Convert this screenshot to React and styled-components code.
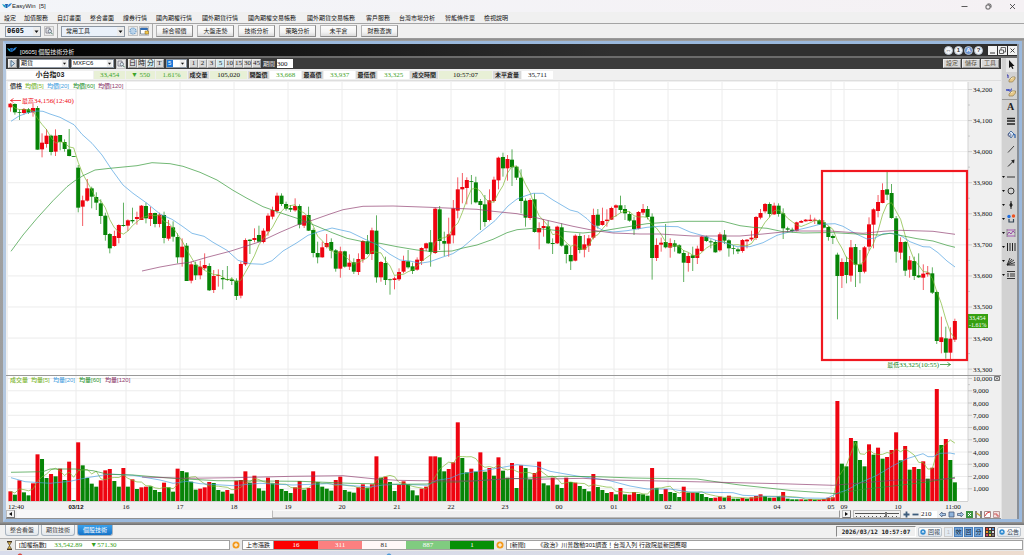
import styled, { createGlobalStyle, css } from "styled-components";

const SANS = `"Liberation Sans", "Noto Sans CJK TC", sans-serif`;
const SERIF = `"Liberation Serif", "Noto Sans CJK TC", serif`;
const MONO = `"DejaVu Sans Mono", "Noto Sans CJK TC", monospace`;

const UP = "#ee0410";
const DOWN = "#078407";
const MA5 = "#7ab52c";
const MA20 = "#4a9fe0";
const MA60 = "#2e9632";
const MA120 = "#8f3c6e";

const GlobalStyle = createGlobalStyle`
	* { box-sizing: border-box; }
	body {
		margin: 0;
		background: #f0f0f0;
		font-family: ${SANS};
		font-size: 6px;
		line-height: 8px;
		color: #222;
	}
	button, input, select {
		margin: 0;
		padding: 0;
		border: 0;
		border-radius: 0;
		font: inherit;
		color: inherit;
	}
	svg { display: block; flex: none; }
`;

const Page = styled.div`
	display: flex;
	flex-direction: column;
	min-height: 100vh;
	white-space: nowrap;
`;

const TitleBar = styled.header`
	display: flex;
	align-items: center;
	height: 12px;
	padding: 0 0 0 2px;
	background: linear-gradient(90deg, #f3f5f9, #f5f1f4);
`;

const Spacer = styled.div`
	flex: 1;
`;

const CaptionButton = styled.button`
	display: flex;
	align-items: center;
	justify-content: center;
	width: 24px;
	height: 11px;
	background: none;
`;

const MenuBar = styled.nav`
	display: flex;
	height: 11px;
	padding: 0 4px;
`;

const menuWidths = { 2: 20, 4: 33, 5: 39, 6: 46, 8: 59 };
const MenuItem = styled.button`
	width: ${(props) => menuWidths[props.$chars]}px;
	background: none;
	text-align: left;
	color: #111;
`;

const Toolbar = styled.div`
	display: flex;
	align-items: center;
	height: 16px;
	padding: 0 5px;
	gap: 3px;
	border-top: 1px solid #a4a4a4;
	border-bottom: 1px solid #9a9a9a;
`;

const Divider = styled.span`
	width: 1px;
	height: 14px;
	background: #aaa;
`;

const Combo = styled.div`
	position: relative;
	width: ${(props) => props.$width}px;
	height: ${(props) => (props.$small ? 9 : 11)}px;
	border: 1px solid #8d97a3;
	background: ${(props) => (props.$small ? "#fff" : "#eaf1fa")};
	svg {
		position: absolute;
		right: 0;
		top: 0;
		height: 100%;
		pointer-events: none;
	}
`;

const Select = styled.select`
	display: block;
	appearance: none;
	width: 100%;
	height: 100%;
	padding-left: ${(props) => (props.$indent ? 4 : 1)}px;
	background: none;
	font-family: ${(props) => (props.$mono ? MONO : SANS)};
	font-weight: ${(props) => (props.$mono ? "bold" : "normal")};
	font-size: ${(props) => (props.$mono ? 7 : 6)}px;
	line-height: 7px;
	color: #111;
`;

const IconButton = styled.button`
	display: flex;
	align-items: center;
	justify-content: center;
	width: 10px;
	height: 10px;
	border: 1px solid #c4c4c4;
	background: #e9e9e9;
`;

const Shortcuts = styled.div`
	display: flex;
	gap: 4px;
`;

const ShortcutButton = styled.button`
	width: 37px;
	height: 12px;
	border: 1px solid #b5b5b5;
	border-right-color: #8c8c8c;
	border-bottom-color: #8c8c8c;
	background: linear-gradient(#fdfdfd, #f3f3f3 60%, #dcdcdc);
	color: #222;
`;

const Workspace = styled.main`
	padding: 2px 2px 3px 3px;
	background: linear-gradient(#8a8a8a, #a4a4a4 2px, #9a9a9a calc(100% - 3px), #6e6e6e);
`;

const Frame = styled.section`
	border: 3px solid #9bb9dd;
	border-left-color: #b4c8e0;
	padding-right: 2px;
	background: #8a9098;
`;

const FrameTitle = styled.div`
	display: flex;
	align-items: center;
	gap: 1px;
	height: 14px;
	padding: 0 0 0 1px;
	border-bottom: 2px solid #6c6c6c;
	background: linear-gradient(90deg, #000, #303030 60%);
	color: #eee;
	font-size: 6px;
`;

const FrameName = styled.span`
	padding: 4px 0 0 2px;
	line-height: 8px;
`;

const RoundButton = styled.button`
	display: flex;
	align-items: center;
	justify-content: center;
	width: 9px;
	height: 9px;
	border-radius: 50%;
	border: 1px solid #b9c3cf;
	background: ${(props) => (props.$blue ? "#6f95d0" : "#f1f4f8")};
	color: ${(props) => (props.$blue ? "#fff" : "#333")};
	font-weight: bold;
	font-size: 6px;
	line-height: 7px;
`;

const WindowButtons = styled.div`
	display: flex;
	gap: 1px;
	padding-left: 4px;
`;

const WindowButton = styled.button`
	width: 9px;
	height: 9px;
	background: #f3f3f3;
`;

const FrameBody = styled.div`
	display: flex;
`;

const Content = styled.div`
	flex: 1;
	min-width: 0;
	background: #f0f0f0;
`;

const ChartBar = styled.div`
	display: flex;
	align-items: center;
	height: 11px;
	padding: 0 2px;
	gap: 2px;
	background: #3b3b3b;
`;

const Group = styled.div`
	display: flex;
	gap: ${(props) => props.$gap || 0}px;
`;

const BarButton = styled.button`
	width: ${(props) => (props.$wide ? 18 : 9)}px;
	height: 9px;
	border: 1px solid #999;
	border-top-color: #eee;
	border-left-color: #eee;
	background: ${(props) => (props.$on ? "#cfeaf0" : "#d8d8d8")};
	font-family: ${SERIF};
	font-size: ${(props) => (props.$wide ? 6 : 7)}px;
	line-height: 7px;
	color: ${(props) => (props.$wide ? "#5c5444" : "#222")};
`;

const FieldLabel = styled.label`
	display: flex;
	align-items: center;
	gap: 2px;
	color: #eee;
`;

const TextInput = styled.input`
	width: 16px;
	height: ${(props) => (props.$low ? 7 : 9)}px;
	background: #fff;
	color: #111;
	font-family: ${SERIF};
	font-size: 7px;
	line-height: 7px;
`;

const QuoteBar = styled.dl`
	display: flex;
	align-items: center;
	height: 12px;
	margin: 0;
	padding: 0 1px;
	border-bottom: 1px solid #dedede;
	gap: 1px;
`;

const QuoteName = styled.dt`
	width: 86px;
	background: #fff;
	text-align: center;
	font-weight: bold;
	font-size: 7px;
`;

const QuoteLabel = styled.dt`
	width: ${(props) => (props.$long ? 28 : 21)}px;
	background: #d9d9d9;
	text-align: center;
	font-size: 6px;
	font-weight: 500;
	color: #000;
`;

const QuoteValue = styled.dd`
	margin: 0;
	width: ${(props) => props.$width || 31}px;
	background: ${(props) => (props.$tint ? "#e8f0d6" : "#fff")};
	color: ${(props) => (props.$down ? "#3fa32a" : "#111")};
	font-family: ${SERIF};
	font-size: 7px;
	text-align: center;
`;

const Chart = styled.svg`
	width: 100%;
	height: auto;
	font-family: ${SERIF};
	font-size: 7px;
`;

const ScrollRow = styled.div`
	display: flex;
	align-items: center;
	height: 9px;
	gap: 2px;
	padding-right: 1px;
	border-bottom: 1px solid #8f8f8f;
`;

const ArrowButton = styled.button`
	display: flex;
	align-items: center;
	justify-content: center;
	width: 9px;
	height: 8px;
	border: 1px solid #bbb;
	border-right-color: #777;
	border-bottom-color: #777;
	background: #f4f4f4;
`;

const ScrollTrack = styled.div`
	display: flex;
	justify-content: flex-end;
	flex: 1;
	height: 8px;
	background: #f8f8f8;
`;

const ScrollThumb = styled.div`
	width: 69%;
	border: 1px solid #fafafa;
	border-left-color: #bbb;
	border-right-color: #999;
	border-bottom-color: #bbb;
	background: #efefef;
`;

const Zoom = styled.input`
	appearance: none;
	width: 48px;
	height: 8px;
	border: 1px solid #bbb;
	background: repeating-linear-gradient(90deg, #555 0 1px, transparent 1px 4px) 2px 5px / 42px 1px no-repeat,
		linear-gradient(#555, #555) 1px 2px / 44px 1px no-repeat, #f3f3f3;
	&::-webkit-slider-thumb {
		appearance: none;
		width: 2px;
		height: 5px;
		background: #777;
	}
`;

const MiniButton = styled.button`
	display: flex;
	align-items: center;
	justify-content: center;
	width: 7px;
	height: 7px;
	background: none;
`;

const ToolColumn = styled.aside`
	display: flex;
	flex-direction: column;
	width: 16px;
	background: #d2d2d2;
	border-left: 1px solid #e4e4e4;
`;

const Tool = styled.button`
	display: flex;
	align-items: center;
	justify-content: flex-end;
	height: 14px;
	padding-right: 1px;
	background: none;
	${(props) => props.$on && css`
		background: linear-gradient(90deg, transparent 4px, #e6e6e6 4px);
	`}
	${(props) => props.$rule && css`
		border-bottom: 1px solid #999;
	`}
`;

const TabBar = styled.div`
	display: flex;
	align-items: center;
	height: 14px;
	padding: 0 3px 0 5px;
	gap: 2px;
	border-bottom: 1px solid #b4b4b4;
`;

const Tab = styled.button`
	width: ${(props) => (props.$on ? 36 : 34)}px;
	height: 11px;
	margin-bottom: 2px;
	border: 1px solid #a9b4c0;
	border-top: 0;
	border-radius: 0 0 3px 3px;
	background: ${(props) => (props.$on ? "linear-gradient(#3aa0ec, #1673c8)" : "linear-gradient(#fafafa, #e4e8ec)")};
	color: ${(props) => (props.$on ? "#fff" : "#444")};
`;

const Clock = styled.time`
	width: 80px;
	height: 11px;
	border: 1px solid #888;
	border-right-color: #fff;
	border-bottom-color: #fff;
	background: #f0f0f0;
	font-family: ${MONO};
	font-weight: bold;
	font-size: 6px;
	line-height: 9px;
	text-align: center;
`;

const SmallButton = styled.button`
	display: flex;
	align-items: center;
	justify-content: center;
	gap: 2px;
	width: 24px;
	height: 10px;
	border: 1px solid #bcc4cd;
	border-radius: 2px;
	background: linear-gradient(#fff, #dde3ea);
	color: #345;
`;

const Indicator = styled.button`
	width: 9px;
	height: 10px;
	border: 1px solid ${(props) => (props.$on ? "#4a7fba" : "#ccc")};
	background: ${(props) => (props.$on ? "#76a8dc" : "#e2eaf2")};
	color: ${(props) => (props.$on ? "#123" : "#bbb")};
	line-height: 8px;
`;

const StatusBar = styled.footer`
	display: flex;
	align-items: center;
	height: 12px;
	padding: 0 1px 0 6px;
	gap: 2px;
	background: #e8e8e8;
`;

const StatusBox = styled.div`
	flex: ${(props) => props.$flex || "none"};
	display: flex;
	gap: ${(props) => (props.$news ? 12 : 8)}px;
	height: 10px;
	padding: 0 3px;
	border: 1px solid #a0a0a0;
	background: #fff;
	color: #111;
`;

const Index = styled.span`
	font-family: ${SERIF};
	font-size: 7px;
	color: #35a020;
`;

const Breadth = styled.span`
	width: 44px;
	height: 10px;
	border: 1px solid #a0a0a0;
	border-width: 1px 0;
	background: ${(props) => props.$bg};
	color: ${(props) => props.$fg || "#fff"};
	font-family: ${SERIF};
	font-size: 7px;
	line-height: 8px;
	text-align: center;
`;

const TaskStrip = styled.div`
	flex: 1;
	min-height: 4px;
	background: radial-gradient(circle at 20px 5px, #d8483e 2px, transparent 3px),
		radial-gradient(circle at 389px 5px, #4e9ad8 2px, transparent 3px),
		linear-gradient(90deg, #d8dceb, #d9dbe6 75%, #f0dccb 92%, #ecdcd0);
`;

const menus = ["設定", "加值服務", "自訂畫面", "整合畫面", "證券行情", "國內期權行情", "國外期貨行情", "國內期權交易帳務", "國外期貨交易帳務", "客戶服務", "台灣市場分析", "智能條件單", "檢視說明"];
const shortcuts = ["綜合報價", "大盤走勢", "技術分析", "策略分析", "未平倉", "財務查詢"];

// side, high, top, bottom, low: thirds of a pixel below each block's base
const candleBlocks = [
	[0, `r69,71,82,95 g70,72,97,104 g88,96,98,120 r84,87,99,104 g84,88,98,102 r72,84,97,110 g78,84,209,209 r160,188,208,232 r147,167,192,203 g164,167,216,226
	r148,167,215,228 g165,165,186,211 g178,186,207,215 g147,208,228,229 g228,228,230,230 g255,263,383,397 r347,361,380,438 r297,325,362,365 g320,325,350,385 g337,351,368,390
	g358,370,408,432 g398,407,465,482 g459,462,505,520 r452,468,498,500 r433,435,474,490 g368,435,438,440 r418,421,437,453 g383,420,424,430 r395,411,417,434 r375,377,420,420
	g368,378,415,430 r380,399,417,438 g398,399,432,442 r398,404,432,442 g395,405,474,490 r420,438,476,482 g424,442,470,485 g460,471,532,550 r475,500,532,560 g489,497,603,603
	r545,553,602,610 g545,554,586,600 r542,560,586,598 r520,555,565,570 g550,558,631,633 r570,588,630,639 r568,585,587,620 g570,594,598,628 g558,597,600,602 g592,598,603,615`],
	[270, `g325,332,378,390 r275,282,377,385 r205,210,283,288 g208,209,213,252 r175,204,210,217 g167,195,215,217 r175,182,216,220 r130,137,184,197 r110,120,140,148 r68,77,123,130
	g70,77,102,108 g95,102,116,122 g105,114,119,126 r85,108,121,125 g103,108,164,175 r135,136,167,174 g110,135,182,183 g175,180,249,262 g215,249,262,280 r215,232,262,263
	r192,219,231,235 g205,216,242,265 g237,241,296,305 r230,244,296,323 g242,244,290,293 r253,278,290,300 g265,277,305,312 r250,267,306,315 r210,213,268,278 g195,214,252,254
	r173,181,252,270 g136,182,322,338 r273,276,322,335 g260,279,330,345 g326,328,330,374 r320,325,330,358 r295,306,328,333 r257,273,305,310 g240,274,292,296 g278,289,303,312
	r262,269,299,302 r232,234,273,285 r218,220,235,243 g180,217,246,290 r113,116,249,252 g108,118,213,240 g185,213,221,258 r143,193,221,260 r90,115,196,220 r22,58,122,145
	r9,51,58,100 r22,30,54,103 g15,33,35,103`],
	[150, `g140,157,217,220 g207,213,225,300 g195,223,276,290 r178,211,270,274 r140,149,213,218 r80,83,151,178 g68,81,115,140 r75,87,115,152 g58,89,112,168 g107,110,143,150
	g118,143,213,250 g205,212,263,290 r205,210,264,270 g190,208,306,308 r277,294,307,358 r268,288,294,320 g272,289,340,342 g325,339,342,372 r287,290,340,342 g280,292,347,350
	g342,346,372,400 g350,375,394,420 r313,317,392,394 g310,318,360,370 r315,343,359,382 r315,325,347,366 r236,255,323,328 g237,254,287,296 r233,273,285,287 r238,269,273,290
	r230,234,269,270 r223,226,233,260 g197,226,240,248 g225,237,250,270 g245,252,272,275`],
	[300, `g110,121,147,165 r93,96,146,148 r72,87,98,105 g78,87,111,118 g100,110,234,299 r175,195,234,243 r173,188,194,215 g132,186,202,205 r175,189,203,233 g180,190,200,215
	g193,196,220,222 g210,219,248,306 r218,228,249,275 g200,226,234,273 r197,206,234,252 r168,170,213,216 g167,170,183,186 g178,184,187,205 g180,186,217,218 r157,163,211,215
	g150,164,182,192 g178,181,205,230 g195,204,206,223 g203,208,214,222 r177,180,213,218 r177,179,184,205 r152,173,178,183 r108,111,174,180 r87,99,113,118 r69,72,94,100
	g67,72,102,112 r68,77,103,105 g70,77,102,110 g85,100,145,177 g140,145,149,157 g143,149,153,157 r125,127,152,154 r120,123,128,129 r117,119,124,125 r104,119,123,124
	r113,119,122,132 g118,121,133,135 g120,127,143,145`],
	[150, `g288,291,321,332 g313,318,324,342 g368,374,438,568 r385,396,438,474 g380,396,435,460 r330,352,437,455 g342,351,404,471 g360,403,426,460 r348,352,425,430 r262,283,350,362
	r235,238,284,355 r195,216,243,262 r160,180,219,220 g126,178,194,210 g162,189,264,266 g258,265,365,398 r322,336,368,388 g333,336,422,438 r378,391,419,443 g380,393,438,450
	g370,436,442,444 r403,431,443,480 r408,428,433,440 g412,430,488,492 g482,486,633,642 r560,622,636,670 g590,625,668,686 r592,626,668,690 r566,573,629,636`],
];

const candles = candleBlocks.flatMap(([base, rows]) =>
	rows.split(/\s+/).map((row) => {
		const [high, top, bottom, low] = row.slice(1).split(",").map((v) => 80 + (base + Number(v)) / 3);
		return { up: row[0] === "r", high, top, bottom, low };
	})
);

const volumes = `r364 g374 r331 g367 g376 r340 r253 g267 g324 r312 g319 r296 g330 r275 g390 r217 g286 g324 g341 g350 r331 r301 r297 g333 g350 r294 g350 r328 g357 r352
r350 g349 g360 g366 r338 g352 g365 r296 g303 g307 g335 g359 r356 r352 r336 g339 g360 g365 r360 g371 r332 r330 r304 g338 r317 g355 g362 r323 g340 r330
g357 g363 g369 r352 r333 g359 r354 r304 g336 g350 g356 g362 r330 r320 g360 g365 g368 r352 r343 g353 r343 r259 g323 r320 g336 g363 r345 r334 g343 g361
g376 r356 r350 r259 r259 g262 g304 r297 r277 r157 g264 g307 r296 g305 r247 g305 r294 g317 r262 g302 g323 r279 g354 r286 g294 g328 r309 r275 g340 g346
r323 g344 g354 r323 g336 r338 g348 g357 g364 r312 g351 g360 g369 r366 g373 r354 g373 r374 r366 g372 g373 g377 r294 g354 g372 r357 g366 g369 g381 r350
g368 r368 g368 g372 g381 g384 r383 r380 g383 r377 g386 g386 r384 g386 r382 r378 r373 g378 g383 r383 g379 r366 g386 g388 g388 r388 g389 r387 g389 r389
r387 r383 r382 r93 g281 g289 r204 g213 g270 g289 r223 g254 r233 g266 r261 r240 r187 g271 r228 g299 r291 g297 r274 g326 r293 r57 g225 r207 g270 g337`
	.split(/\s+/)
	.map((v) => ({ up: v[0] === "r", top: 370 + Number(v.slice(1)) / 3 }));

const barX = (i) => 10.4 + i * 4.519;

const average = (values) =>
	values
		.map((_, i) => {
			const part = values.slice(Math.max(0, i - 4), i + 1);
			return `${barX(i).toFixed(1)},${(part.reduce((a, b) => a + b, 0) / part.length).toFixed(1)}`;
		})
		.join(" ");

const priceMa5 = average(candles.map((c) => (c.up ? c.top : c.bottom)));
const volumeMa5 = average(volumes.map((v) => v.top));

const priceMa20 = "11,121.3 19,116 28,112.7 37,111 43,111.3 50,114 60,117.3 74,124.7 82,134.3 92,143.3 102,155 112,170 123,185 133,193.3 147,203.3 160,214 172,219.3 182,226 192,233.3 204,236.3 213,242.3 227,250.3 238,260.3 250,263.7 263,264.3 272,260.7 283,251 297,242.7 308,235.3 320,231.3 332,228 350,232 363,238.3 377,244.7 390,254.3 400,260 410,261 420,263.3 430,261.7 442,257.3 453,253.6 463,247 477,235 495,220.7 508,206 517,199 523,196.7 533,193.3 543,193.3 553,200 570,210 578,212 587,218.7 593,225 603,230.3 613,232 627,230.7 633,229.7 647,227.3 660,226.3 678,226.7 690,232 703,235.7 717,240.7 727,243.3 737,246.7 750,246.7 763,242.7 777,235.3 790,231.7 807,227.7 820,224.3 835,223.7 843,226.3 855,233.3 867,239 875,238 883,233.7 892,233.3 900,235.3 910,241.7 923,246.7 930,247 938,252.7 947,261 955,267";
const priceMa60 = "11,251.3 23,235 37,218.3 53,200.7 67,186.7 74,181.3 83,175.7 95,170 110,168.3 137,165.7 152,162.7 170,163.7 183,166.3 200,172.3 217,180 233,190.3 247,198.3 263,206.7 280,212.7 300,219.3 318,226.7 333,233 347,238.3 363,241.7 380,243.3 397,246.7 417,250 433,251.7 452,251 463,248 477,245 493,239.3 507,232.7 517,229.7 533,228.3 550,229.7 567,231.7 583,233 600,231.3 620,228 647,223.7 680,221.3 723,221.3 740,225.7 753,227.3 767,228.3 783,231.7 803,233 830,232.5 863,234.3 880,235 890,233.3 900,235.3 917,238.7 933,241 947,245.3 955,247.3";
const priceMa120 = "142,271 160,267 177,264 190,262.3 207,257.3 230,251.3 260,241.7 280,232.3 297,225 313,220 330,214 343,209.7 363,206.3 393,206 430,207.3 477,209.3 493,211.3 517,213.7 533,217 553,221.7 573,226.3 593,230.3 613,233 640,234 660,234 693,236 740,236 763,234 793,231 830,231 863,233.3 883,231.3 900,230.3 933,231.3 955,234.3";
const volumeMa20 = "11,477.7 25,481.7 50,483.3 70,481.3 87,477.7 110,474 133,475.3 160,480 173,483.3 187,481.3 200,483.7 233,485.7 260,483.3 293,485 327,483.7 370,487 383,485 400,484.3 427,485.3 437,480.3 450,478.3 460,474 473,472 493,469 517,464.7 538,466.7 550,471.3 577,476 607,480 630,486 647,489 670,489 690,492 733,492.7 743,495.3 777,496.7 807,498 827,498.3 837,493.3 847,490 860,482.7 877,475.3 893,465.7 907,458.7 923,453.7 928,456.7 933,456.7 940,453.3 950,453 955,454";
const volumeMa60 = "11,472.3 43,471.7 50,469 75,469 93,470.7 108,474.3 133,475 153,476.7 173,478.3 217,480.7 260,481 300,481.3 350,483.3 400,484.3 427,484 437,482 457,482 477,480.7 527,478 560,476.3 597,476.7 633,478 697,479 720,482.3 740,485 793,490.7 837,493.7 860,489.7 893,486 927,482 955,477.3";
const volumeMa120 = "142,477 187,478.3 233,477.7 293,476.3 343,475.7 373,478.7 397,480.3 420,480.7 473,481 510,478.3 533,479.3 583,478.3 610,480 660,481 720,482.3 780,483.7 833,485.3 860,483 897,480 930,480 955,478.3";

const prices = [34200, 34100, 34000, 33900, 33800, 33700, 33600, 33500, 33400, 33300];
const priceY = (p) => 89.5 + ((34200 - p) / 100) * 31.07;
const lots = [10000, 9000, 8000, 7000, 6000, 5000, 4000, 3000, 2000, 1000];
const lotY = (v) => 501 - v * 0.01225;
const hours = [
	["16", 126], ["17", 180], ["18", 234], ["19", 288], ["20", 342], ["21", 397], ["22", 451], ["23", 505],
	["00", 559], ["01", 614], ["02", 668], ["03", 722], ["04", 777], ["05", 831], ["09", 844], ["10", 898], ["11:00", 953],
];

const priceLegend = [
	["價格", 10, "#222"],
	["均價[5]", 25, MA5],
	["均價[20]", 47, MA20],
	["均價[60]", 73, MA60],
	["均價[120]", 98, MA120],
];
const volumeLegend = [
	["成交量", 10, MA5],
	["均量[5]", 31, MA5],
	["均量[20]", 53, MA20],
	["均量[60]", 79, MA60],
	["均量[120]", 105, MA120],
];

function Legend({ y, items }) {
	return items.map(([label, x, color]) => (
		<text key={label} x={x} y={y} fill={color} fontSize="6" fontWeight="500" fontFamily={SANS}>{label}</text>
	));
}

function Line({ points, color }) {
	return <polyline points={points} fill="none" stroke={color} strokeWidth="0.8" opacity="0.85" />;
}

function KLineChart() {
	return (
		<Chart viewBox="6 81 995 429" role="img" aria-label="小台指03">
			<rect x="6" y="81" width="995" height="429" fill="#f0f0f0" />
			<rect x="8" y="82" width="960" height="419" fill="#fff" />
			<g stroke="#ececec" strokeWidth="1">
				{prices.map((p) => <path key={p} d={`M8 ${priceY(p)}H968`} />)}
				{lots.map((v) => <path key={v} d={`M8 ${lotY(v)}H968`} />)}
				<path d="M76 82V501" />
				{hours.map(([h, x]) => <path key={h} d={`M${x} 82V501`} />)}
			</g>
			<path d="M968 82V501M8 501.5H968" stroke="#d2d2d2" />
			<g stroke="#b8b8b8" strokeWidth="0.7">
				{prices.map((p) => <path key={p} d={`M968 ${priceY(p)}h4M968 ${priceY(p) + 15.5}h2`} />)}
				{lots.map((v) => <path key={v} d={`M968 ${lotY(v)}h4`} />)}
			</g>
			<g fill="#111">
				{prices.map((p) => <text key={p} x="973" y={priceY(p) + 2.5}>{p.toLocaleString("en-US")}</text>)}
				{lots.map((v) => <text key={v} x="973" y={lotY(v) + 2.5}>{v.toLocaleString("en-US")}</text>)}
				<text x="8" y="509">12:40</text>
				<text x="76" y="509" textAnchor="middle" fontFamily={SANS} fontWeight="bold" fontSize="6">03/12</text>
				{hours.map(([h, x]) => <text key={h} x={x} y="509" textAnchor="middle">{h}</text>)}
			</g>
			<path d="M6 375.5H1001" stroke="#999" />
			<path d="M994.5 376.5h5v4h-5zM995.5 377.5l3 2m0-2l-3 2" fill="none" stroke="#555" strokeWidth="0.8" />

			{candles.map((c, i) => (
				<g key={i} fill={c.up ? UP : DOWN}>
					<rect x={barX(i) - 0.4} y={c.high} width="0.8" height={c.low - c.high} opacity="0.8" />
					<rect x={barX(i) - 2} y={c.top} width="4" height={Math.max(0.8, c.bottom - c.top)} />
				</g>
			))}
			<Line points={priceMa5} color={MA5} />
			<Line points={priceMa20} color={MA20} />
			<Line points={priceMa60} color={MA60} />
			<Line points={priceMa120} color={MA120} />

			{volumes.map((v, i) => (
				<rect key={i} x={barX(i) - 2} y={v.top} width="4" height={501 - v.top} fill={v.up ? UP : DOWN} />
			))}
			<Line points={volumeMa5} color={MA5} />
			<Line points={volumeMa20} color={MA20} />
			<Line points={volumeMa60} color={MA60} />
			<Line points={volumeMa120} color={MA120} />

			<Legend y={88} items={priceLegend} />
			<Legend y={382} items={volumeLegend} />

			<path d="M21 100.5H10.5m3-2l-3 2l3 2" fill="none" stroke={UP} strokeWidth="0.7" />
			<text x="22" y="102.5" fill={UP} fontSize="6">最高<tspan fontSize="7">34,156(12:40)</tspan></text>
			<path d="M940 364.5h10.5m-3-2l3 2l-3 2" fill="none" stroke="#188418" strokeWidth="0.7" />
			<text x="939" y="366.5" fill="#188418" fontSize="6" textAnchor="end">最低<tspan fontSize="7">33,325(10:55)</tspan></text>
			<rect x="968" y="314" width="20" height="14" fill="#35a010" />
			<g fill="#fff" fontSize="6">
				<text x="969" y="320">33,454</text>
				<text x="969" y="327">-1.61%</text>
			</g>
			<rect x="822" y="171" width="145" height="189" fill="none" stroke="#f01820" strokeWidth="2.2" />
		</Chart>
	);
}

function Logo() {
	return (
		<svg width="10" height="7" viewBox="0 0 10 7">
			<path d="M0 1l3 1 1 3-2-1z" fill="#1aa0c8" />
			<path d="M3 1l3 0-1 4-1 0z" fill="#1d5fb0" />
			<path d="M5 4l2-3 3-1-2 3-2 1-1 1z" fill="#2b86d8" />
		</svg>
	);
}

function DropArrow() {
	return (
		<svg width="7" viewBox="0 0 7 9" aria-hidden="true">
			<rect width="7" height="9" fill="#ececec" />
			<path d="M1.5 3.5h4l-2 2.5z" fill="#111" />
		</svg>
	);
}

function DropDown({ label, options, width, small, mono, indent }) {
	return (
		<Combo $width={width} $small={small}>
			<Select aria-label={label} $mono={mono} $indent={indent}>
				{options.map((o) => <option key={o}>{o}</option>)}
			</Select>
			<DropArrow />
		</Combo>
	);
}

const PeriodBox = styled(Combo)`
	select {
		background: linear-gradient(90deg, #1c78d8 6px, transparent 6px);
		color: #fff;
	}
`;

function PeriodSelect() {
	return (
		<PeriodBox $width={21} $small>
			<Select aria-label="分鐘"><option>5</option></Select>
			<DropArrow />
		</PeriodBox>
	);
}

function SearchIcon() {
	return (
		<svg width="8" height="8" viewBox="0 0 8 8" fill="none" stroke="#667">
			<path d="M1 1h4v5H1z" strokeWidth="0.7" />
			<circle cx="4.8" cy="4.2" r="1.7" strokeWidth="0.8" fill="#dff1f5" />
			<path d="M6 5.5l1.6 1.8" stroke="#3a7a5a" />
		</svg>
	);
}

function PlusDot() {
	return (
		<svg width="8" height="8" viewBox="0 0 8 8">
			<circle cx="4" cy="4" r="3.5" fill="#f39a1d" />
			<path d="M4 2v4M2 4h4" stroke="#fff" />
		</svg>
	);
}

function BlueDot() {
	return (
		<svg width="6" height="6" viewBox="0 0 6 6">
			<circle cx="3" cy="3" r="2.7" fill="#2f8ad0" />
			<path d="M1.5 3.4L3 1.6l1.5 1.8z" fill="#fff" />
		</svg>
	);
}

const tools = [
	["游標", <path d="M3 0v8l2-1.600L6.400 9l1.100-.6L6.300 6h2.200z" fill="#111" />],
	["清除一筆", <g><path d="M3 6l3-3h3l-2.500 3z" fill="#fff4d0" stroke="#8a7340" strokeWidth=".7" /><path d="M3 6v2h3.500L9 5V3" fill="#e6c88a" stroke="#8a7340" strokeWidth=".6" /><path d="M1 1h1v3" fill="none" stroke="#22a" strokeWidth=".9" /></g>],
	["全部清除", <g><path d="M3 6l3-3h3.500L7 6z" fill="#fff4d0" stroke="#8a7340" strokeWidth=".7" /><path d="M3 6v2h4L9.500 5V3" fill="#e6c88a" stroke="#8a7340" strokeWidth=".6" /><path d="M0 3l1-2 1 2 1-2v2h2V1h1" fill="none" stroke="#23b" strokeWidth=".8" /></g>],
	["文字", <text x="1" y="8" fontSize="10" fontWeight="bold" fontFamily="Liberation Serif" fill="#222">A</text>],
	["線寬", <path d="M1 2.500h8M1 5h8M1 8h8" stroke="#222" strokeWidth="1.300" />],
	["填色", <g><path d="M2 4l3-3 3 3-3 4z" fill="#dbe9f8" stroke="#446a9a" strokeWidth=".9" /><path d="M7 4l2 1v3" fill="none" stroke="#3568b0" strokeWidth="1.300" /><circle cx="3.500" cy="5" r="1.500" fill="none" stroke="#557" strokeWidth=".7" /></g>],
	["直線", <path d="M2 8.500l6-6.500" stroke="#333" strokeWidth=".9" />],
	["箭頭", <g><path d="M2 8.500l5-5" stroke="#222" /><path d="M8.500 1.500l-.5 4L5 2.500z" fill="#222" /></g>],
	["水平線", <path d="M1 5h8" stroke="#333" />],
	["圓形", <circle cx="5" cy="5" r="3" fill="none" stroke="#333" strokeWidth="1" />],
	["標記", <g fill="#222"><path d="M5 1v8" stroke="#222" /><path d="M3.200 5L5 2.500 6.800 5 5 7.500z" /></g>],
	["多空", <g><circle cx="3" cy="2.500" r="1.700" fill="#1f6fe0" /><circle cx="7.500" cy="2" r="1.700" fill="#ee5320" /><path d="M3 5v3h4.500V5" fill="none" stroke="#345" strokeWidth="1.200" /></g>],
	["通道", <g><path d="M1 2h8M1 8h8" stroke="#a03ab0" strokeWidth=".8" /><path d="M1 7l2-3 2 2 2-3 2 2" fill="none" stroke="#8a2c9a" strokeWidth=".8" /><path d="M1 1v8M9 1v8" stroke="#777" strokeWidth=".7" /></g>],
	["週期線", <path d="M1.500 1v8M4 1v8M6.500 1v8M9 1v8" stroke="#222" strokeWidth="1" />],
	["扇形線", <path d="M1 9l3-7M1 9l5-6M1 9l7-5M1 9h8M1 9l8-2.500" stroke="#222" strokeWidth=".9" />],
	["黃金分割", <path d="M1 1.500h8M4 4h5M4 6h5M1 8.500h8M2 3v4" stroke="#222" strokeWidth=".9" fill="none" />],
];

function App() {
	return (
		<>
			<GlobalStyle />
			<Page>
				<TitleBar>
					<Logo />
					<span>EasyWin&nbsp; [5]</span>
					<Spacer />
					<CaptionButton aria-label="最小化"><svg width="7" height="7" viewBox="0 0 7 7"><path d="M.5 3.500h6" stroke="#333" strokeWidth=".8" /></svg></CaptionButton>
					<CaptionButton aria-label="還原"><svg width="7" height="7" viewBox="0 0 7 7" fill="none" stroke="#333" strokeWidth=".8"><rect x="1" y="2" width="4" height="4" rx="1" /><path d="M2.500 1h2q1.500 0 1.500 1.500v2" /></svg></CaptionButton>
					<CaptionButton aria-label="關閉"><svg width="7" height="7" viewBox="0 0 7 7"><path d="M1 1l5 5M6 1L1 6" stroke="#333" strokeWidth=".8" /></svg></CaptionButton>
				</TitleBar>

				<MenuBar>
					{menus.map((m) => <MenuItem key={m} $chars={m.length}>{m}</MenuItem>)}
				</MenuBar>

				<Toolbar>
					<DropDown label="代碼" options={["0605"]} width={36} mono />
					<IconButton aria-label="查詢"><SearchIcon /></IconButton>
					<Divider />
					<DropDown label="工具" options={["常用工具"]} width={64} indent />
					<Group $gap={1}>
						<IconButton aria-label="選項"><svg width="8" height="8" viewBox="0 0 8 8"><circle cx="4" cy="4" r="3" fill="#cfe2f4" stroke="#6c9cc8" strokeWidth="1.200" strokeDasharray="1.400 .6" /><circle cx="4" cy="4" r="1.200" fill="#fff" stroke="#6c9cc8" strokeWidth=".6" /></svg></IconButton>
						<IconButton aria-label="視窗"><svg width="9" height="8" viewBox="0 0 9 8"><path d="M.5 1h7v6h-7z" fill="#fff" stroke="#567" strokeWidth=".7" /><path d="M.5 1h7v2h-7z" fill="#2f6cb5" /><path d="M5 4h3.500v3H5z" fill="#f2c84a" stroke="#806020" strokeWidth=".5" /></svg></IconButton>
					</Group>
					<Divider />
					<Shortcuts>
						{shortcuts.map((s) => <ShortcutButton key={s}>{s}</ShortcutButton>)}
					</Shortcuts>
				</Toolbar>

				<Workspace>
					<Frame>
						<FrameTitle>
							<Logo />
							<FrameName>[0605] 個股技術分析</FrameName>
							<Spacer />
							<RoundButton aria-label="連結">↔</RoundButton>
							<RoundButton>1</RoundButton>
							<RoundButton $blue>A</RoundButton>
							<RoundButton>?</RoundButton>
							<WindowButtons>
								<WindowButton aria-label="最小化視窗"><svg width="9" height="9"><path d="M2 7h5" stroke="#333" /></svg></WindowButton>
								<WindowButton aria-label="還原視窗"><svg width="9" height="9" fill="none" stroke="#444" strokeWidth=".8"><path d="M1.500 4h4v3.500h-4zM3 4V1.500h4.500V6H5.500" /></svg></WindowButton>
								<WindowButton aria-label="關閉視窗"><svg width="9" height="9"><path d="M2.500 2.500l4 4M6.500 2.500l-4 4" stroke="#333" strokeWidth=".9" /></svg></WindowButton>
							</WindowButtons>
						</FrameTitle>

						<FrameBody>
							<Content>
								<ChartBar>
									<BarButton aria-label="展開"><svg width="7" height="7" viewBox="0 0 7 7"><path d="M2 .5v6l3.500-3z" fill="#d6ecfa" stroke="#357" strokeWidth=".8" /></svg></BarButton>
									<DropDown label="市場" options={["期貨"]} width={50} small />
									<DropDown label="商品" options={["MXFC6"]} width={43} small />
									<IconButton aria-label="搜尋商品"><SearchIcon /></IconButton>
									<Group>
										<BarButton>日</BarButton>
										<BarButton>時</BarButton>
										<BarButton $on>分</BarButton>
										<BarButton>T</BarButton>
									</Group>
									<PeriodSelect />
									<Group>
										{["1", "2", "3", "5", "10", "15", "30", "45"].map((m) => (
											<BarButton key={m} $on={m === "5"}>{m}</BarButton>
										))}
									</Group>
									<FieldLabel>期間<TextInput defaultValue="300" /></FieldLabel>
									<Spacer />
									<Group $gap={1}>
										<BarButton $wide>設定</BarButton>
										<BarButton $wide>儲存</BarButton>
										<BarButton $wide>工具</BarButton>
									</Group>
								</ChartBar>

								<QuoteBar>
									<QuoteName>小台指03</QuoteName>
									<QuoteValue $tint $down>33,454</QuoteValue>
									<QuoteValue $tint $down $width={29}>▼ 550</QuoteValue>
									<QuoteValue $tint $down>1.61%</QuoteValue>
									<QuoteLabel>成交量</QuoteLabel>
									<QuoteValue $tint $width={37}>105,020</QuoteValue>
									<QuoteLabel>開盤價</QuoteLabel>
									<QuoteValue $down>33,668</QuoteValue>
									<QuoteLabel>最高價</QuoteLabel>
									<QuoteValue $down>33,937</QuoteValue>
									<QuoteLabel>最低價</QuoteLabel>
									<QuoteValue $down>33,325</QuoteValue>
									<QuoteLabel $long>成交時間</QuoteLabel>
									<QuoteValue $tint $width={53}>10:57:07</QuoteValue>
									<QuoteLabel $long>未平倉量</QuoteLabel>
									<QuoteValue>35,711</QuoteValue>
								</QuoteBar>

								<KLineChart />

								<ScrollRow>
									<ArrowButton aria-label="向左"><svg width="5" height="6"><path d="M4 1v4L1 3z" fill="#111" /></svg></ArrowButton>
									<ScrollTrack><ScrollThumb /></ScrollTrack>
									<ArrowButton aria-label="向右"><svg width="5" height="6"><path d="M1 1v4l3-2z" fill="#111" /></svg></ArrowButton>
									<Zoom type="range" aria-label="縮放" defaultValue="70" />
									<MiniButton aria-label="放大"><svg width="7" height="7"><path d="M3.500 .5v6M.5 3.500h6" stroke="#3d5c7c" strokeWidth="1.800" /></svg></MiniButton>
									<MiniButton aria-label="縮小"><svg width="7" height="7"><path d="M.5 3.500h6" stroke="#3d5c7c" strokeWidth="1.800" /></svg></MiniButton>
									<TextInput $low aria-label="筆數" defaultValue="210" />
									<Group $gap={2}>
										<MiniButton aria-label="左移"><svg width="7" height="7"><path d="M.5 3.500L3 1v1.500h3.500v2H3V6z" fill="#a8c8e8" stroke="#457" strokeWidth=".7" /></svg></MiniButton>
										<MiniButton aria-label="全部"><svg width="7" height="7"><path d="M1 1h5v5H1z" fill="#8fb4dc" stroke="#457" strokeWidth=".8" /></svg></MiniButton>
										<MiniButton aria-label="右移"><svg width="7" height="7"><path d="M6.500 3.500L4 1v1.500H.5v2H4V6z" fill="#a8c8e8" stroke="#457" strokeWidth=".7" /></svg></MiniButton>
										<MiniButton aria-label="匯出"><svg width="7" height="7"><path d="M0 0h7v7H0z" fill="#3d9440" /><path d="M2 2l3 3M5 2L2 5" stroke="#fff" /></svg></MiniButton>
										<MiniButton aria-label="排列"><svg width="7" height="7"><path d="M1 0v7M6 0v7" stroke="#555" strokeWidth="1.400" /><path d="M1.500 2l4 3" stroke="#c8a630" strokeWidth="1.400" /></svg></MiniButton>
										<MiniButton aria-label="走勢"><svg width="7" height="7"><path d="M.5 .5h6v6h-6z" fill="#fff" stroke="#a88" /><path d="M1 5l2-3 3-1" fill="none" stroke="#d44" /></svg></MiniButton>
										<MiniButton aria-label="新增圖"><svg width="7" height="7"><path d="M.5 .5h6v6h-6z" fill="#f4dede" stroke="#b99" /><path d="M1 3h3v2h2" fill="none" stroke="#c55" /></svg></MiniButton>
									</Group>
								</ScrollRow>
							</Content>

							<ToolColumn>
								{tools.map(([name, icon], i) => (
									<Tool key={name} aria-label={name} $on={i === 0} $rule={i === 2}>
										{i > 7 && <svg width="4" height="4"><path d="M0 1h3L1.500 3z" fill="#111" /></svg>}
										<svg width="10" height="10" viewBox="0 0 10 10">{icon}</svg>
									</Tool>
								))}
							</ToolColumn>
						</FrameBody>
					</Frame>
				</Workspace>

				<TabBar>
					<Tab>整合看盤</Tab>
					<Tab>期貨技術</Tab>
					<Tab $on>個股技術</Tab>
					<Spacer />
					<Clock>2026/03/12 10:57:07</Clock>
					<SmallButton><BlueDot />回報</SmallButton>
					<Group $gap={1}>
						<Indicator>1</Indicator>
						<Indicator $on>效</Indicator>
						<Indicator $on>回</Indicator>
						<Indicator $on>分</Indicator>
					</Group>
					<svg width="10" height="10" viewBox="0 0 10 10">
						<rect width="10" height="10" fill="#433" />
						{["#d43", "#ddd", "#48c", "#e92", "#4a5", "#ddd", "#c46", "#dc4", "#777"].map((c, i) => (
							<rect key={i} x={1 + (i % 3) * 3} y={1 + Math.floor(i / 3) * 3} width="2" height="2" fill={c} />
						))}
					</svg>
					<SmallButton><BlueDot />公告</SmallButton>
				</TabBar>

				<StatusBar>
					<svg width="7" height="9" viewBox="0 0 7 9"><path d="M1 .5h5M1 8.500h5" stroke="#432" /><path d="M1.500 1h4L3.500 4.500 5.500 8h-4l2-3.500z" fill="#e4c04c" stroke="#543" strokeWidth=".7" /></svg>
					<StatusBox $flex="0 0 215px">
						<span>[加權指數]</span>
						<Index>33,542.89</Index>
						<Index>▼571.30</Index>
					</StatusBox>
					<PlusDot />
					<Group>
						<StatusBox>上市漲跌</StatusBox>
						<Breadth $bg="#fb0000">16</Breadth>
						<Breadth $bg="#fb8080">311</Breadth>
						<Breadth $bg="#fff8f8" $fg="#222">81</Breadth>
						<Breadth $bg="#80cb80">887</Breadth>
						<Breadth $bg="#089008">1</Breadth>
					</Group>
					<PlusDot />
					<StatusBox $flex="1" $news>
						<span>[新聞]</span>
						<span>《政治》川普啟動301調查！台灣入列 行政院最新回應曝</span>
					</StatusBox>
				</StatusBar>
				<TaskStrip />
			</Page>
		</>
	);
}

export default App;
